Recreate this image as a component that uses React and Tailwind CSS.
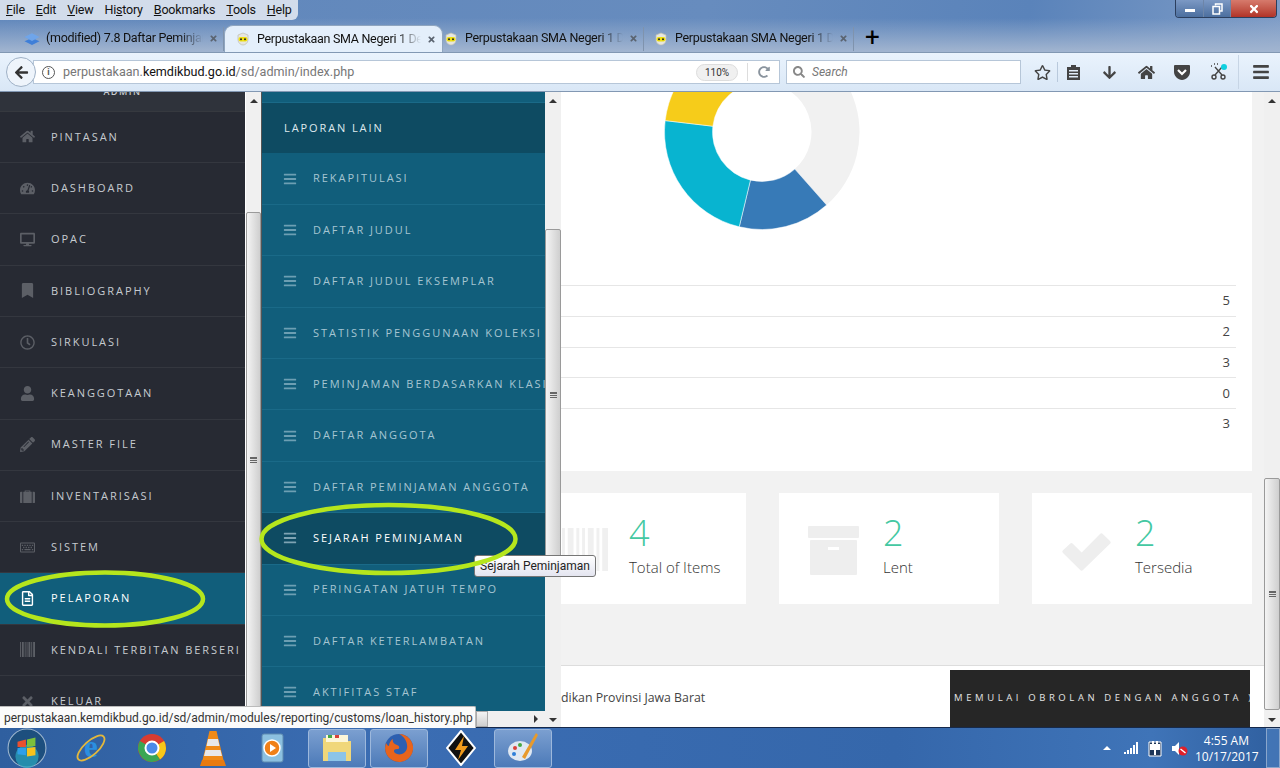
import React from "react";
import { FaHome, FaTachometerAlt, FaDesktop, FaBookmark, FaRegClock, FaUser, FaPencilAlt, FaRegKeyboard, FaRegFileAlt, FaTimes, FaBars, FaRegStar, FaArrowDown, FaArrowLeft, FaSearch, FaRedoAlt } from "react-icons/fa";

const sideMenu = [
  { label: "PINTASAN", icon: FaHome },
  { label: "DASHBOARD", icon: FaTachometerAlt },
  { label: "OPAC", icon: FaDesktop },
  { label: "BIBLIOGRAPHY", icon: FaBookmark },
  { label: "SIRKULASI", icon: FaRegClock },
  { label: "KEANGGOTAAN", icon: FaUser },
  { label: "MASTER FILE", icon: FaPencilAlt },
  { label: "INVENTARISASI", icon: SuitcaseIcon },
  { label: "SISTEM", icon: FaRegKeyboard },
  { label: "PELAPORAN", icon: FaRegFileAlt, active: true },
  { label: "KENDALI TERBITAN BERSERI", icon: BarcodeIcon },
  { label: "KELUAR", icon: FaTimes },
];

const subMenu = [
  "REKAPITULASI",
  "DAFTAR JUDUL",
  "DAFTAR JUDUL EKSEMPLAR",
  "STATISTIK PENGGUNAAN KOLEKSI",
  "PEMINJAMAN BERDASARKAN KLASIFIKASI",
  "DAFTAR ANGGOTA",
  "DAFTAR PEMINJAMAN ANGGOTA",
  "SEJARAH PEMINJAMAN",
  "PERINGATAN JATUH TEMPO",
  "DAFTAR KETERLAMBATAN",
  "AKTIFITAS STAF",
];

const tabs = [
  { title: "(modified) 7.8 Daftar Peminjaman", icon: "stack", w: "w-[210px]", pad: "pl-[10px]" },
  { title: "Perpustakaan SMA Negeri 1 Depok", icon: "owl", w: "w-[219px]", pad: "pl-[10px]", active: true },
  { title: "Perpustakaan SMA Negeri 1 Depok", icon: "owl", w: "w-[201px]", pad: "pl-0" },
  { title: "Perpustakaan SMA Negeri 1 Depok", icon: "owl", w: "w-[210px]", pad: "pl-[9px]" },
];

function BarcodeIcon({ className }) {
  return (
    <svg className={className} viewBox="0 2 16 12" preserveAspectRatio="none" fill="currentColor">
      <path d="M0 2h1v12H0zM2 2h2v12H2zM5 2h1v12H5zM7 2h1v12H7zM9 2h2v12H9zM12 2h1v12h-1zM14 2h2v12h-2z" />
    </svg>
  );
}

function SuitcaseIcon({ className }) {
  return (
    <svg className={className} viewBox="0 0 16 16" fill="currentColor">
      <path d="M5 3V1.500h6V3h-1V2.500H6V3zM0 4a1 1 0 011-1h1.500v12H1a1 1 0 01-1-1zM3.500 3h9v12h-9zM13.500 3H15a1 1 0 011 1v10a1 1 0 01-1 1h-1.500z" />
    </svg>
  );
}

function OwlIcon() {
  return (
    <svg width="14" height="14" viewBox="0 0 14 14">
      <path d="M2 3l5-2 5 2v5c0 3-3 5-5 5s-5-2-5-5z" fill="#e6e6df" stroke="#bdbdb2" strokeWidth="0.7" />
      <rect x="2.500" y="5" width="9" height="4.500" rx="2" fill="#f0e010" />
      <circle cx="5" cy="7.200" r="1" fill="#222" />
      <circle cx="9" cy="7.200" r="1" fill="#222" />
    </svg>
  );
}

function StackIcon() {
  return (
    <svg width="17" height="14" viewBox="0 0 17 14">
      <path d="M8.500 6l8 3.500-8 4-8-4z" fill="#3f7fd8" />
      <path d="M8.500 1l8 4-8 4-8-4z" fill="#6fa5ea" />
    </svg>
  );
}

function BrowserTab({ tab }) {
  return (
    <div className={`${tab.w} ${tab.pad} relative flex h-[27px] items-center gap-[6px] pr-[6px] ${tab.active ? "rounded-t-[9px] border border-b-0 border-[#8fa5bf] bg-[#e4effb]" : ""}`}>
      <span className="flex w-[16px] shrink-0 justify-center">{tab.icon === "owl" ? <OwlIcon /> : <StackIcon />}</span>
      <span className="min-w-0 flex-1 overflow-hidden whitespace-nowrap text-[12.5px] tracking-[-0.3px] text-[#111] [mask-image:linear-gradient(to_right,black_85%,transparent_100%)]">
        {tab.title}
      </span>
      <FaTimes className="shrink-0 text-[9px] text-[#5b6470]" />
      {!tab.active && <span className="absolute right-0 top-[2px] h-[24px] w-px bg-[#7f93ad]" />}
    </div>
  );
}

function Scrollbar({ top, thumb, wide = "w-[16px]" }) {
  return (
    <div className={`${wide} relative flex shrink-0 flex-col bg-[#f0f0f0]`}>
      <div style={{ height: top }} className="flex shrink-0 justify-center pt-[7px]">
        <span className="h-0 w-0 border-x-[4px] border-b-[4px] border-x-transparent border-b-[#333]" />
      </div>
      <div style={{ height: thumb }} className="flex shrink-0 items-center justify-center rounded-[2px] border border-[#9a9a9a] bg-gradient-to-r from-[#f4f4f4] to-[#cfcfcf]">
        <span className="h-[6px] w-[7px] border-y border-[#666] bg-[linear-gradient(#666_1px,transparent_1px)] bg-[length:100%_2px]" />
      </div>
      <div className="flex flex-1 items-end justify-center pb-[5px]">
        <span className="h-0 w-0 border-x-[4px] border-t-[4px] border-x-transparent border-t-[#333]" />
      </div>
    </div>
  );
}

function Donut() {
  const seg = (from, to) => {
    const cx = 100, cy = 100, R = 97.5, r = 49.5;
    const p = (a, rad) => {
      const t = (a * Math.PI) / 180;
      return `${(cx + rad * Math.sin(t)).toFixed(2)} ${(cy - rad * Math.cos(t)).toFixed(2)}`;
    };
    const large = to - from > 180 ? 1 : 0;
    return `M${p(from, R)}A${R} ${R} 0 ${large} 1 ${p(to, R)}L${p(to, r)}A${r} ${r} 0 ${large} 0 ${p(from, r)}Z`;
  };
  return (
    <svg width="200" height="200" viewBox="0 0 200 200" className="ml-[101px] mt-[-60px] block">
      <path d={seg(0, 138.5)} fill="#f1f1f1" />
      <path d={seg(138.5, 193.5)} fill="#377ab7" stroke="#fff" strokeWidth="0.5" />
      <path d={seg(193.5, 276.7)} fill="#08b4d0" stroke="#fff" strokeWidth="0.5" />
      <path d={seg(276.7, 360)} fill="#f6cc1a" stroke="#fff" strokeWidth="0.5" />
    </svg>
  );
}

function StatCard({ width, pad, icon, value, label }) {
  return (
    <div className={`${width} ${pad} flex h-[111px] items-start overflow-hidden bg-white`}>
      {icon}
      <div>
        <div className="mt-[20px] text-[36px] font-light leading-[40px] text-[#44c8a2]">{value}</div>
        <div className="mt-[3px] text-[15px] font-light leading-[22px] text-[#333]">{label}</div>
      </div>
    </div>
  );
}

function TaskSlot({ children, width = "w-[61px]", boxed }) {
  return (
    <div className={`${width} flex h-[39px] shrink-0 items-center justify-center ${boxed ? "rounded-[3px] border border-[#9db8dc] bg-gradient-to-b from-[#7b9fd0] to-[#4c7ab8]" : ""}`}>
      {children}
    </div>
  );
}

export default function App() {
  return (
    <div className="relative flex h-[768px] w-[1280px] flex-col overflow-hidden font-['Open_Sans',sans-serif]">
      {/* title and tabs */}
      <div className="relative h-[52px] shrink-0 bg-[linear-gradient(100deg,#5f86bb_0%,#678cbe_55%,#5a83ba_80%,#7f9dc7_100%)] font-['Roboto',sans-serif]">
        <div className="absolute inset-x-0 bottom-0 h-[34px] bg-gradient-to-b from-transparent to-[#a2b5d0]" />
        <div className="relative flex h-[20px] w-[298px] items-center gap-[11px] rounded-br-[6px] bg-[#dfe6f0]/90 pl-[6px] text-[12.5px] tracking-[-0.2px] text-[#111]">
          <span><u>F</u>ile</span>
          <span><u>E</u>dit</span>
          <span><u>V</u>iew</span>
          <span>Hi<u>s</u>tory</span>
          <span><u>B</u>ookmarks</span>
          <span><u>T</u>ools</span>
          <span><u>H</u>elp</span>
        </div>
        <div className="absolute right-[3px] top-0 flex h-[18px] w-[102px] overflow-hidden rounded-b-[4px] border border-t-0 border-[#2c3f5e]">
          <div className="flex w-[28px] items-center justify-center border-r border-[#6d85a8] bg-gradient-to-b from-[#7c99c4] to-[#4c6f9f]">
            <span className="mt-[3px] h-[3px] w-[10px] bg-white" />
          </div>
          <div className="flex w-[27px] items-center justify-center border-r border-[#6d85a8] bg-gradient-to-b from-[#7c99c4] to-[#4c6f9f]">
            <svg width="11" height="12" viewBox="0 0 11 12" fill="none" stroke="#fff" strokeWidth="1.500">
              <path d="M3.500 2.500V1h6.500v7H8" />
              <rect x="1" y="3.500" width="6.500" height="7.500" />
            </svg>
          </div>
          <div className="flex flex-1 items-center justify-center bg-gradient-to-b from-[#d67a6c] to-[#b13227]">
            <FaTimes className="text-[12px] text-white" />
          </div>
        </div>
        <div className="absolute bottom-0 left-[14px] flex items-end">
          {tabs.map((tab, i) => <BrowserTab key={i} tab={tab} />)}
          <span className="mb-[3px] ml-[11px] text-[26px] leading-[24px] text-black">+</span>
        </div>
      </div>

      {/* nav bar */}
      <div className="flex h-[40px] shrink-0 items-center border-y border-[#8298b3] bg-gradient-to-b from-[#eaf3fd] to-[#d9e7f6] pl-[6px] font-['Roboto',sans-serif]">
        <div className="z-10 flex h-[30px] w-[30px] shrink-0 items-center justify-center rounded-full border border-[#9fb1c6] bg-[#eef4fb] text-[15px] text-[#333]">
          <FaArrowLeft />
        </div>
        <div className="ml-[-3px] flex h-[24px] w-[747px] shrink-0 items-center border border-[#b6c6d8] bg-white pl-[8px] pr-[4px]">
          <span className="flex h-[13px] w-[13px] shrink-0 items-center justify-center rounded-full border border-[#555] text-[9px] font-bold leading-none text-[#555]">i</span>
          <span className="ml-[8px] text-[12.6px] text-[#777]">perpustakaan.<span className="text-[#111]">kemdikbud.go.id</span>/sd/admin/index.php</span>
          <span className="ml-auto flex h-[17px] w-[42px] items-center justify-center rounded-full border border-[#ddd] bg-[#f0f0f0] text-[10px] text-[#333]">110%</span>
          <span className="ml-[9px] h-[18px] w-px bg-[#ddd]" />
          <FaRedoAlt className="ml-[10px] mr-[5px] text-[12px] text-[#8a949e]" />
        </div>
        <div className="ml-[6px] flex h-[24px] w-[235px] shrink-0 items-center border border-[#b6c6d8] bg-white pl-[6px]">
          <FaSearch className="text-[12px] text-[#888]" />
          <span className="ml-[7px] text-[12px] italic text-[#777]">Search</span>
        </div>
        <div className="flex items-center text-[#444]">
          <FaRegStar className="ml-[13px] text-[17px]" />
          <span className="ml-[6px] h-[20px] w-px bg-[#b9c9dc]" />
          <svg className="ml-[8px]" width="15" height="17" viewBox="0 0 15 17" fill="#444"><path d="M1 3h4V1h5v2h4v13H1zM3 6v1.500h9V6zM3 9v1.500h9V9zM3 12v1.500h9V12z" fillRule="evenodd" /></svg>
          <FaArrowDown className="ml-[21px] text-[15px]" />
          <FaHome className="ml-[21px] text-[17px]" />
          <svg className="ml-[19px]" width="16" height="15" viewBox="0 0 16 15"><path d="M1 0h14a1 1 0 011 1v6c0 4-4 8-8 8S0 11 0 7V1a1 1 0 011-1z" fill="#444" /><path d="M4 5l4 4 4-4" fill="none" stroke="#fff" strokeWidth="2.200" /></svg>
          <svg className="ml-[20px]" width="17" height="18" viewBox="0 0 17 18" fill="none" stroke="#444" strokeWidth="1.400"><circle cx="4" cy="14" r="2" /><circle cx="13" cy="14" r="2" /><path d="M5 12l7-8M12 12L5 4" /><path d="M1 3h1M4 1h1M7 1h1" /><circle cx="14" cy="4" r="3" fill="#10d0e0" stroke="none" /></svg>
          <span className="ml-[11px] h-[34px] w-px bg-[#c7d5e5]" />
          <FaBars className="ml-[13px] text-[18px]" />
        </div>
      </div>

      {/* page content */}
      <div className="flex h-[635px] shrink-0 overflow-hidden bg-white">
        <aside className="w-[245px] shrink-0 overflow-hidden bg-[#272a33]">
          <div className="flex h-[19.8px] justify-center overflow-hidden border-b border-[#36393f] bg-[#2f333b]">
            <span className="mt-[-7px] text-[9px] font-semibold tracking-[1.500px] text-[#c9ccd0]">ADMIN</span>
          </div>
          {sideMenu.map((m) => {
            const Icon = m.icon;
            return (
              <div key={m.label} className={`flex h-[51.3px] items-center whitespace-nowrap border-b border-[#34373f] pl-[19px] text-[11px] tracking-[1.95px] ${m.active ? "bg-[#115e7b] text-white" : "text-[#c6cbd0]"}`}>
                <span className={`flex w-[16px] shrink-0 justify-center ${m.active ? "text-white" : "text-[#5c5f66]"}`}>
                  <Icon className="h-[15px] w-[15px]" />
                </span>
                <span className="ml-[16px]">{m.label}</span>
              </div>
            );
          })}
        </aside>
        <div className="w-px shrink-0 bg-white" />
        <Scrollbar top="120px" thumb="496px" wide="w-[15px]" />
        <div className="w-px shrink-0 bg-[#555]" />

        <nav className="h-[619px] w-[283px] shrink-0 overflow-hidden bg-[#115e7b]">
          <div className="h-[11.4px] border-b border-[#1a6a88]" />
          <div className="flex h-[50px] items-center bg-[#0e4b62] pl-[22px] text-[11px] tracking-[1.9px] text-[#dfe9ee]">LAPORAN LAIN</div>
          {subMenu.map((s) => {
            const on = s === "SEJARAH PEMINJAMAN";
            return (
              <div key={s} className={`flex h-[51.4px] items-center whitespace-nowrap border-b border-[#1a6a88] pl-[21px] text-[11px] tracking-[1.95px] ${on ? "bg-[#0e4b62] text-white" : "text-[#a5c5d2]"}`}>
                <FaBars className={`h-[14px] w-[14px] shrink-0 ${on ? "text-[#7ea3b3]" : "text-[#6d9fb3]"}`} />
                <span className="ml-[16px]">{s}</span>
              </div>
            );
          })}
        </nav>
        <Scrollbar top="137px" thumb="332px" />

        <main className="w-[703px] shrink-0 overflow-hidden bg-[#f2f2f2]">
          <div className="h-[379px] w-[691px] bg-white">
            <div className="h-[193px] overflow-hidden"><Donut /></div>
            <div className="w-[675px] text-right text-[13px] text-[#444]">
              {[5, 2, 3, 0, 3].map((v, i) => (
                <div key={i} className="flex h-[30.800px] items-center justify-end border-t border-[#e6e6e6] pr-[6px]">{v}</div>
              ))}
            </div>
          </div>
          <div className="mt-[22px] flex w-[691px] gap-[33px]">
            <StatCard
              width="w-[185px]"
              pad="pl-px"
              icon={<BarcodeIcon className="mr-[21px] mt-[35px] h-[43px] w-[46px] shrink-0 text-[#f0f0f0]" />}
              value="4"
              label="Total of Items"
            />
            <StatCard
              width="w-[220px]"
              pad="pl-[29px]"
              icon={
                <svg className="mr-[24px] mt-[33px] shrink-0" width="51" height="49" viewBox="0 0 51 49" fill="#eeeeee">
                  <path d="M1 0h49a1 1 0 011 1v10a1 1 0 01-1 1H1a1 1 0 01-1-1V1a1 1 0 011-1z" />
                  <path d="M3 14h45a1 1 0 011 1v33a1 1 0 01-1 1H3a1 1 0 01-1-1V15a1 1 0 011-1zM20 21v3h11v-3z" fillRule="evenodd" />
                </svg>
              }
              value="2"
              label="Lent"
            />
            <StatCard
              width="w-[220px]"
              pad="pl-[30px]"
              icon={
                <svg className="mr-[24px] mt-[40px] shrink-0" width="49" height="38" viewBox="0 0 49 38" fill="#eeeeee">
                  <path d="M38 1a2 2 0 012.800 0l7.200 7a2 2 0 010 2.800L21 37a2 2 0 01-2.800 0L1 20a2 2 0 010-2.800l7-6.500a2 2 0 012.800 0l8.900 8.800z" />
                </svg>
              }
              value="2"
              label="Tersedia"
            />
          </div>
          <div className="mt-[61px] flex h-[62px] items-start border-t border-[#ddd] bg-white">
            <span className="mt-[23px] text-[12.3px] text-[#444]">dikan Provinsi Jawa Barat</span>
            <div className="ml-auto mr-[14px] mt-[4px] flex h-[58px] w-[300px] items-center overflow-hidden whitespace-nowrap bg-[#262626] pb-[2px] pl-[4px] text-[9.5px] tracking-[3.6px] text-[#e4e4e4]">
              MEMULAI OBROLAN DENGAN ANGGOTA )
            </div>
          </div>
        </main>
        <Scrollbar top="386px" thumb="232px" />
      </div>

      {/* taskbar */}
      <div className="flex h-[41px] shrink-0 items-center border-t border-[#16294a] bg-[linear-gradient(90deg,#2f5f9f_0%,#3b6db3_30%,#3567ab_70%,#3f74b8_90%,#2f5f9f_100%)]">
        <TaskSlot width="w-[54px]">
          <svg width="40" height="40" viewBox="0 0 38 38">
            <circle cx="19" cy="19" r="18" fill="#1d4f7e" stroke="#9fb7cf" strokeWidth="1" />
            <circle cx="19" cy="27" r="11" fill="#2ba8c0" opacity="0.7" />
            <path d="M10 13l8-2v7h-8z" fill="#e8502f" />
            <path d="M19 11l8-2v8l-8 1z" fill="#7cbf3c" />
            <path d="M10 19h8v7l-8-1z" fill="#2f9fe8" />
            <path d="M19 19l8-1v8l-8 1z" fill="#f6c21c" />
          </svg>
        </TaskSlot>
        <div className="w-[6px] shrink-0" />
        <TaskSlot>
          <svg width="34" height="34" viewBox="0 0 34 34">
            <text x="17" y="26" textAnchor="middle" fontSize="31" fontWeight="700" fontFamily="Liberation Serif, serif" fill="#2b8fe0">e</text>
            <ellipse cx="17" cy="17" rx="17" ry="7" fill="none" stroke="#e4b83c" strokeWidth="1.800" transform="rotate(-42 17 17)" />
          </svg>
        </TaskSlot>
        <TaskSlot>
          <svg width="30" height="30" viewBox="0 0 30 30">
            <circle cx="15" cy="15" r="14" fill="#d83c31" />
            <path d="M15 15L27.100 8A14 14 0 0123 26.500z" fill="#f7c81a" />
            <path d="M15 15L23 26.500A14 14 0 012.900 8z" fill="#3aa654" />
            <circle cx="15" cy="15" r="6.500" fill="#4a8ae8" stroke="#fff" strokeWidth="2" />
          </svg>
        </TaskSlot>
        <TaskSlot>
          <svg width="28" height="36" viewBox="0 0 28 36">
            <path d="M1 36l2-6h22l2 6z" fill="#e87a10" />
            <path d="M10.500 1h7l7 29h-21z" fill="#f08a16" />
            <path d="M9 9h10l1.500 7h-13zM6.500 20h15l1.500 6H5z" fill="#e8e8e8" />
          </svg>
        </TaskSlot>
        <TaskSlot>
          <svg width="26" height="30" viewBox="0 0 26 30">
            <rect x="1" y="1" width="21" height="28" rx="2" fill="#8cc0e0" stroke="#5f8cb0" />
            <circle cx="11" cy="15" r="8" fill="#f08018" stroke="#fff" strokeWidth="1.500" />
            <path d="M9 11l6 4-6 4z" fill="#fff" />
          </svg>
        </TaskSlot>
        <div className="w-[4px] shrink-0" />
        <TaskSlot width="w-[58px]" boxed>
          <svg width="32" height="32" viewBox="0 0 32 32">
            <path d="M2 6h11l2 3h15v20H2z" fill="#f0d77a" />
            <rect x="5" y="3" width="22" height="7" fill="#fdf6d8" />
            <rect x="7" y="3" width="4" height="3" fill="#45a845" />
            <rect x="14" y="3" width="4" height="3" fill="#d8423a" />
            <rect x="7" y="20" width="18" height="9" fill="#8cc4e8" />
          </svg>
        </TaskSlot>
        <div className="w-[4px] shrink-0" />
        <TaskSlot width="w-[58px]" boxed>
          <svg width="32" height="32" viewBox="0 0 32 32">
            <circle cx="16" cy="16" r="14" fill="#2d5fb0" />
            <path d="M16 2a14 14 0 11-13 9c1 2 2 3 3 3 0-3 2-6 4-7-1 3 1 5 4 6 3 1 3 4 0 4-3 0-4 2-2 4 4 3 11 1 12-5 1-6-3-12-8-14z" fill="#e8641c" />
          </svg>
        </TaskSlot>
        <TaskSlot width="w-[66px]">
          <svg width="30" height="36" viewBox="0 0 30 36">
            <path d="M15 1l14 17-14 17L1 18z" fill="#111" stroke="#fff" strokeWidth="2" />
            <path d="M18 6L9 20h6l-3 10 10-14h-6z" fill="#f09a1c" />
          </svg>
        </TaskSlot>
        <TaskSlot width="w-[58px]" boxed>
          <svg width="32" height="32" viewBox="0 0 32 32">
            <ellipse cx="13" cy="19" rx="12" ry="10" fill="#dfe8f2" />
            <circle cx="8" cy="16" r="2" fill="#d8423a" />
            <circle cx="13" cy="13" r="2" fill="#45a845" />
            <circle cx="7" cy="22" r="2" fill="#2f7fd8" />
            <path d="M29 1l2 2-13 24-3-2z" fill="#e89a2c" />
          </svg>
        </TaskSlot>

        <div className="ml-[551px] flex items-center">
          <span className="h-0 w-0 border-x-[4px] border-b-[4px] border-x-transparent border-b-white" />
          <svg className="ml-[13px]" width="15" height="12" viewBox="0 0 15 12" fill="#fff"><path d="M0 10h2v2H0zM3 8h2v4H3zM6 6h2v6H6zM9 3h2v9H9zM12 0h2v12h-2z" /></svg>
          <svg className="ml-[9px]" width="14" height="17" viewBox="0 0 14 17"><path d="M1 2h12v14H1z" fill="#1c3558" stroke="#fff" /><path d="M5 1v4M9 1v4M3 5h8v4H3zM7 9v6" stroke="#fff" strokeWidth="2" fill="#fff" /></svg>
          <svg className="ml-[10px]" width="16" height="15" viewBox="0 0 16 15"><path d="M0 5h3l4-4v13l-4-4H0z" fill="#fff" /><circle cx="11" cy="10" r="4.500" fill="#e0202a" /><path d="M8.500 8l5 4" stroke="#fff" strokeWidth="1.500" /></svg>
          <div className="ml-[7px] w-[62px] whitespace-nowrap pt-[2px] text-right text-[12px] leading-[16px] text-white">
            <div className="pr-[8px]">4:55 AM</div>
            <div>10/17/2017</div>
          </div>
        </div>
        <div className="ml-auto h-[40px] w-[14px] border border-[#8aa6cc] bg-[#4a7dbd]/70" />
      </div>

      {/* status url popup */}
      <div className="absolute left-0 top-[706px] flex h-[22px] w-[476px] items-center whitespace-nowrap rounded-tr-[2px] border-r border-t border-[#bbb] bg-[#fbfbfb] pl-[4px] font-['Roboto',sans-serif] text-[12px] text-[#333]">
        perpustakaan.kemdikbud.go.id/sd/admin/modules/reporting/customs/loan_history.php
      </div>
      {/* horizontal scrollbar of the sub menu */}
      <div className="absolute left-[476px] top-[711px] flex h-[16px] w-[69px] items-center bg-[#f0f0f0]">
        <span className="h-full w-[12px] border border-[#aaa] bg-gradient-to-b from-[#f4f4f4] to-[#cfcfcf]" />
        <span className="ml-auto mr-[7px] h-0 w-0 border-y-[4px] border-l-[4px] border-y-transparent border-l-[#333]" />
      </div>

      {/* tooltip */}
      <div className="absolute left-[474px] top-[555px] flex h-[22px] w-[122px] items-center justify-center whitespace-nowrap rounded-[3px] border border-[#767676] bg-gradient-to-b from-white to-[#e4e5f0] font-['Roboto',sans-serif] text-[12px] text-[#222]">
        Sejarah Peminjaman
      </div>

      {/* hand drawn marks */}
      <svg className="absolute left-[4px] top-[570px]" width="202" height="58" viewBox="0 0 202 58">
        <ellipse cx="101" cy="29" rx="98" ry="26.500" fill="none" stroke="#b5e61d" strokeWidth="4.500" />
      </svg>
      <svg className="absolute left-[259px] top-[502px]" width="259" height="74" viewBox="0 0 259 74">
        <ellipse cx="129.500" cy="37" rx="127" ry="34" fill="none" stroke="#b5e61d" strokeWidth="4.500" />
      </svg>
    </div>
  );
}
